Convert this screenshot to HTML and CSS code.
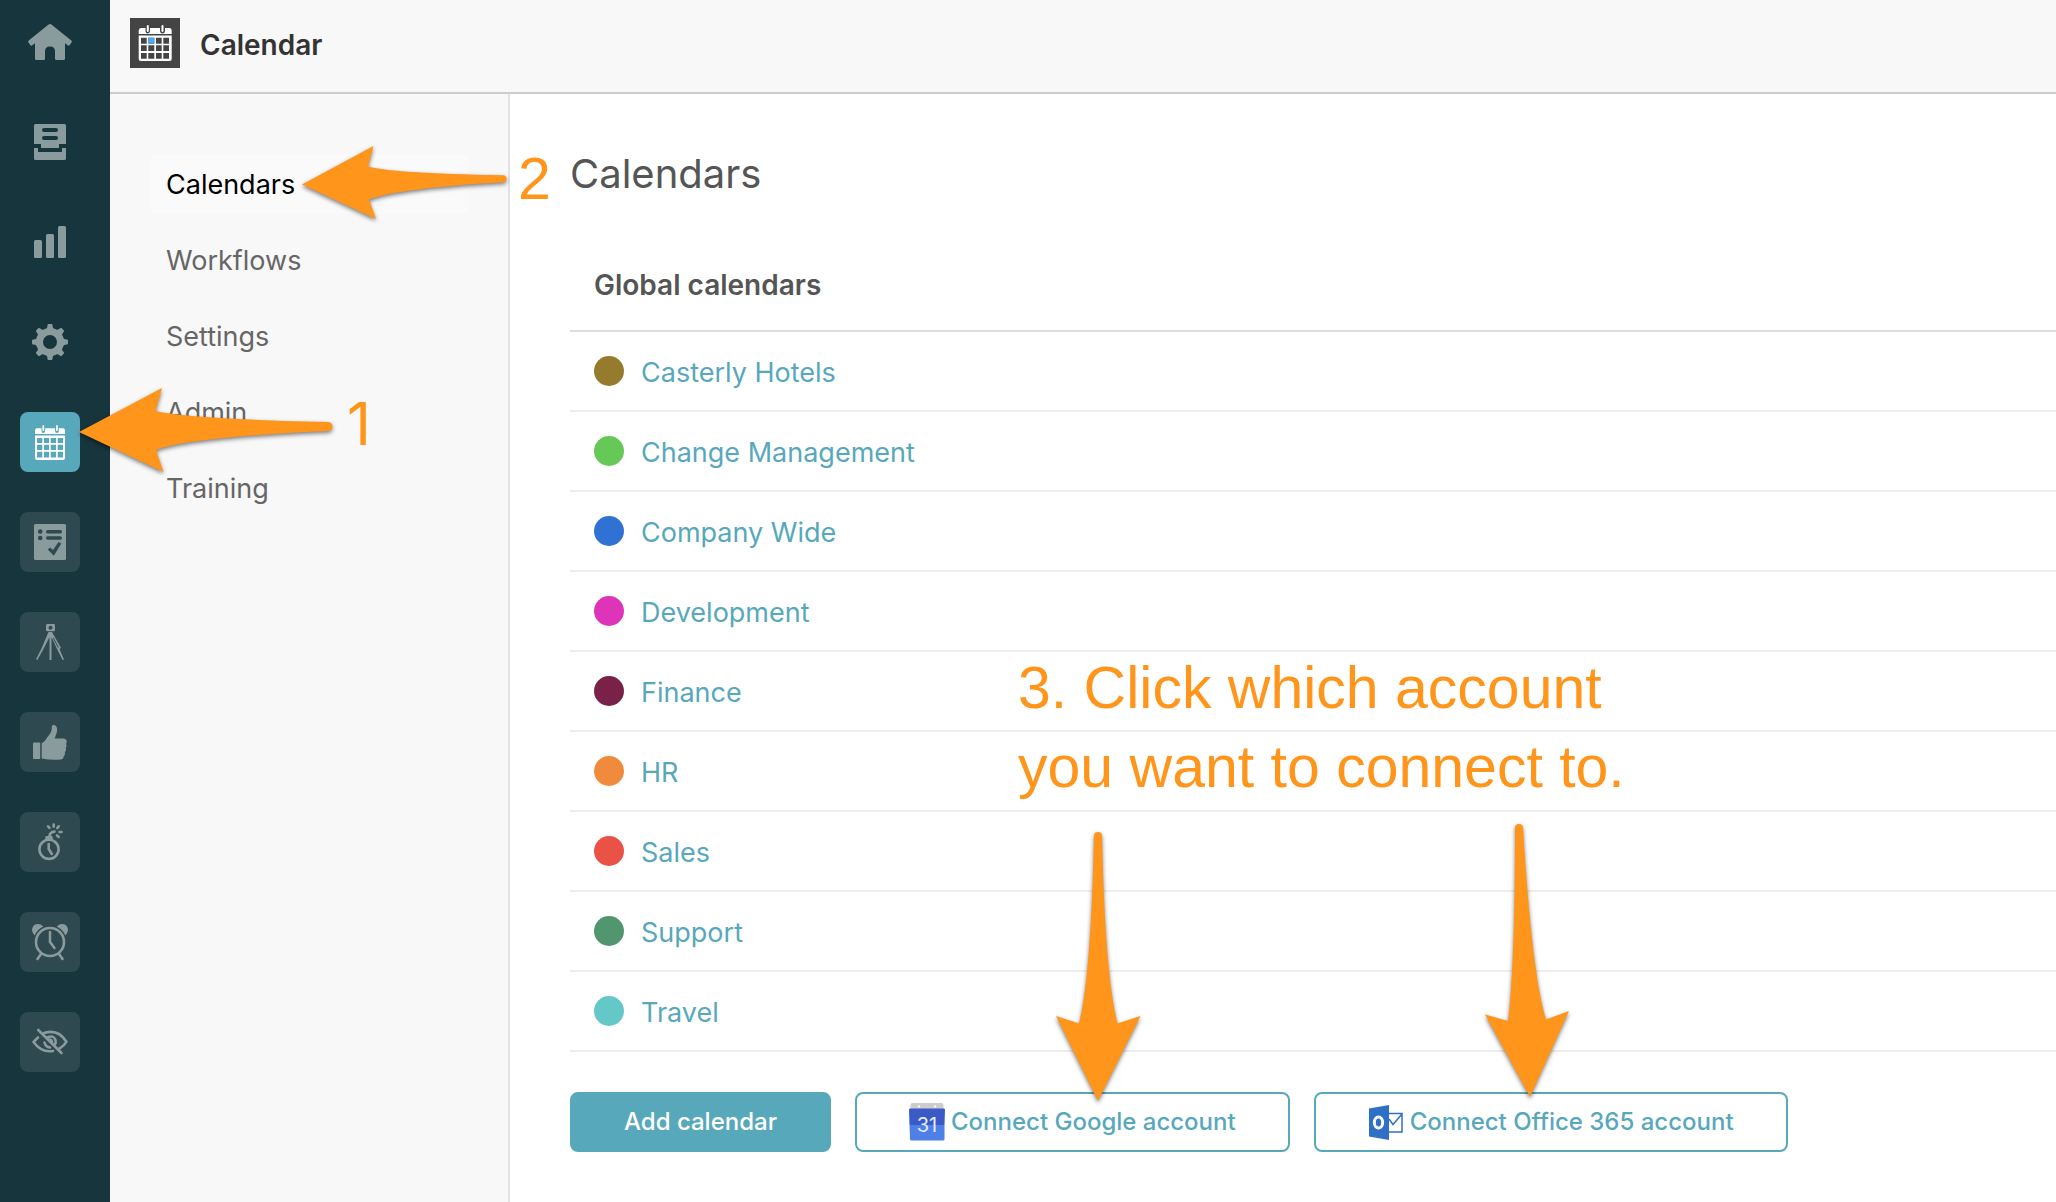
FILE: index.html
```html
<!DOCTYPE html>
<html lang="en">
<head>
<meta charset="utf-8">
<title>Calendar</title>
<meta name="viewport" content="width=device-width, initial-scale=1">
<link rel="stylesheet" href="styles.css">
</head>
<body>
<div class="app">
  <nav class="rail" aria-label="Applications">
    <a class="rail-item" href="#" aria-label="Home"><svg viewBox="0 0 60 60"><path d="M28.600 12.600Q30 11.400 31.400 12.600L51.300 28.600Q52.400 29.600 51.500 30.600L49.600 33.200Q48.700 34.100 47.600 33.300L45 31.200V46.500Q45 48 43.500 48H36.500Q35 48 35 46.500V39.500Q35 34.500 30 34.500T25 39.500V46.500Q25 48 23.500 48H16.500Q15 48 15 46.500V31.200L12.400 33.300Q11.300 34.100 10.400 33.200L8.500 30.600Q7.600 29.600 8.700 28.600Z"/></svg></a>
    <a class="rail-item" href="#" aria-label="Inbox"><svg viewBox="0 0 60 60"><path fill-rule="evenodd" d="M15.500 12H44.500Q46 12 46 13.500V32H39V36H21V32H14V13.500Q14 12 15.500 12ZM24 16A2 2 0 0 0 24 20H36A2 2 0 0 0 36 16ZM24 24A2 2 0 0 0 24 28H36A2 2 0 0 0 36 24Z"/><path d="M14 36H18V40H42V36H46V46.500Q46 48 44.500 48H15.500Q14 48 14 46.500Z"/></svg></a>
    <a class="rail-item" href="#" aria-label="Reports"><svg viewBox="0 0 60 60"><rect x="14" y="28" width="8" height="18" rx="1.500"/><rect x="26" y="22" width="8" height="24" rx="1.500"/><rect x="38" y="14" width="8" height="32" rx="1.500"/></svg></a>
    <a class="rail-item" href="#" aria-label="Preferences"><svg viewBox="0 0 60 60"><circle cx="30" cy="30" r="10.500" fill="none" stroke="currentColor" stroke-width="7"/><g><path id="tooth" d="M24 18.500Q27.500 17 27.500 13.200Q27.500 12 28.700 12H31.300Q32.500 12 32.500 13.200Q32.500 17 36 18.500Z"/><use href="#tooth" transform="rotate(45 30 30)"/><use href="#tooth" transform="rotate(90 30 30)"/><use href="#tooth" transform="rotate(135 30 30)"/><use href="#tooth" transform="rotate(180 30 30)"/><use href="#tooth" transform="rotate(225 30 30)"/><use href="#tooth" transform="rotate(270 30 30)"/><use href="#tooth" transform="rotate(315 30 30)"/></g></svg></a>
    <a class="rail-item tile active" href="#" aria-label="Calendar" aria-current="page"><svg viewBox="0 0 60 60"><path d="M15 22V18.500Q15 16.300 17 16.300H21.500V18.500Q21.500 21 23.300 21T25.200 18.500V16.300H35V18.500Q35 21 37 21T38.800 18.500V16.300H43Q45 16.300 45 18.500V22Z"/><rect x="22.400" y="13" width="1.800" height="6" rx=".9"/><rect x="36" y="13" width="1.800" height="6" rx=".9"/><path fill-rule="evenodd" d="M15 23.500H45V46Q45 48 43 48H17Q15 48 15 46ZM17 26V31H22.300V26ZM24 26V31H29V26ZM30.700 26V31H36V26ZM37.700 26V31H43V26ZM17 32.700V38H22.300V32.700ZM24 32.700V38H29V32.700ZM30.700 32.700V38H36V32.700ZM37.700 32.700V38H43V32.700ZM17 39.700V45.500H22.300V39.700ZM24 39.700V45.500H29V39.700ZM30.700 39.700V45.500H36V39.700ZM37.700 39.700V45.500H43V39.700Z"/></svg></a>
    <a class="rail-item tile" href="#" aria-label="Tasks"><svg viewBox="0 0 60 60"><rect x="14" y="12" width="32" height="36" rx="1.500"/><g class="cut"><circle cx="20.200" cy="19.600" r="2.300"/><circle cx="20.200" cy="26" r="2.300"/><rect x="26" y="17.900" width="16" height="3.500" rx="1.700"/><rect x="26" y="24.200" width="16" height="3.500" rx="1.700"/><path d="M27.800 37.500L30 35.500L33 38L38.500 30L41.300 31.500L33.800 43.800Z"/></g></svg></a>
    <a class="rail-item tile" href="#" aria-label="Survey"><svg viewBox="0 0 60 60"><path fill-rule="evenodd" d="M27.500 12H33.800Q35 12 35 13.200V18Q35 19.200 33.800 19.200H27.200Q26 19.200 26 18V13.200Q26 12 27.500 12ZM30.500 13.700A2 2 0 1 0 30.500 17.700A2 2 0 1 0 30.500 13.700Z"/><path d="M28.500 20H32L41 36L39.500 37L44 47.500L42.700 48L37 37L31.500 25V48H29.500V25L23.500 37L17.300 48L16 47.300L21.500 36.500Z"/><path class="scratch" d="M33.300 26L38.300 35.500"/></svg></a>
    <a class="rail-item tile" href="#" aria-label="Recognition"><svg viewBox="0 0 60 60"><rect x="13" y="30.500" width="7.200" height="16.500" rx="1"/><path d="M21.700 31.500Q25 29.500 27.500 25Q30 22.500 31.200 19.500Q32 17 31.800 14.500Q32.500 12.300 34.500 13Q37 14 37.200 17Q37.300 20 34.700 26.500H42Q46 26 46.700 29Q47 31 46 31.800Q47.500 33.500 45.800 36Q46.800 38.500 44.900 40.400Q45.500 43 43.600 44.300Q44 46.500 41 47.500Q31 48.300 21.700 46.500Z"/></svg></a>
    <a class="rail-item tile" href="#" aria-label="Incidents"><svg viewBox="0 0 60 60"><circle class="line" cx="29" cy="37.300" r="9.600"/><rect x="25.300" y="24" width="7.400" height="5" rx="1"/><path class="line" d="M28.700 32V37L31.800 42M29.500 24Q30 20 34.500 19.600"/><path class="line" d="M28 14.300L29.500 15.800M33.700 12.500V14.600M38.700 14.300L37.300 16M39.600 20H41.500M37 23.500L38.700 25"/></svg></a>
    <a class="rail-item tile" href="#" aria-label="Time tracking"><svg viewBox="0 0 60 60"><circle class="line" cx="30" cy="30" r="14"/><path class="line" d="M30 20V30L34.500 36M21 42L17.500 47M39 42L42.500 47"/><path d="M14.800 23.500Q17 17.500 23.300 14.500Q20 11.300 16 12.300Q12 13.500 12 18.500Q12.500 21.500 14.800 23.500ZM45.200 23.500Q43 17.500 36.700 14.500Q40 11.300 44 12.300Q48 13.500 48 18.500Q47.500 21.500 45.200 23.500Z"/></svg></a>
    <a class="rail-item tile" href="#" aria-label="Hidden"><svg viewBox="0 0 60 60"><path class="line" d="M18 25.500L13.500 30Q21.500 41 33 39M24 21Q38 16.500 46.500 29.700Q44 34 39.500 36.500M27 25.500Q33.500 22.500 35.500 28Q36 31 35 32.500M24.500 30.500Q25.500 35 30 35.500M29.500 27.500Q32 28 32 30"/><path class="line" d="M18.300 18L41.500 41"/></svg></a>
  </nav>
  <div class="workspace">
    <header class="topbar">
      <svg class="app-icon" viewBox="0 0 50 50" aria-hidden="true"><rect width="50" height="50" fill="#444"/><g fill="#fff"><path d="M8.700 16V12.500Q8.700 10 11 10H15.500V12.500Q15.500 15.500 17.700 15.500T20 12.500V10H30V12.500Q30 15.500 32.500 15.500T35 12.500V10H39.500Q41.700 10 41.700 12.500V16Z"/><rect x="16.800" y="7" width="2" height="7" rx="1"/><rect x="31.500" y="7" width="2" height="7" rx="1"/><path fill-rule="evenodd" d="M8.700 17.500H41.700V41Q41.700 43 39.700 43H10.700Q8.700 43 8.700 41ZM11 19.700V25.700H16.700V19.700ZM18.300 19.700V25.700H24.300V19.700ZM26 19.700V25.700H31.700V19.700ZM33.300 19.700V25.700H39V19.700ZM11 27.300V33H16.700V27.300ZM18.300 27.300V33H24.300V27.300ZM26 27.300V33H31.700V27.300ZM33.300 27.300V33H39V27.300ZM11 35V40.700H16.700V35ZM18.300 35V40.700H24.300V35ZM26 35V40.700H31.700V35ZM33.300 35V40.700H39V35Z"/></g><path fill="#4aa8f5" d="M18.300 19.700H24.300V25.700H18.300Z"/></svg>
      <span class="app-name">Calendar</span>
    </header>
    <div class="columns">
      <nav class="subnav" aria-label="Calendar sections">
        <a class="subnav-link current" href="#">Calendars</a>
        <a class="subnav-link" href="#">Workflows</a>
        <a class="subnav-link" href="#">Settings</a>
        <a class="subnav-link" href="#">Admin</a>
        <a class="subnav-link" href="#">Training</a>
      </nav>
      <main class="content">
        <h1 class="page-title">Calendars</h1>
        <table class="calendars">
          <thead><tr><th scope="col">Global calendars</th></tr></thead>
          <tbody>
            <tr><td><a class="calendar" href="#"><span class="dot brown"></span><span class="name">Casterly Hotels</span></a></td></tr>
            <tr><td><a class="calendar" href="#"><span class="dot green"></span><span class="name">Change Management</span></a></td></tr>
            <tr><td><a class="calendar" href="#"><span class="dot blue"></span><span class="name">Company Wide</span></a></td></tr>
            <tr><td><a class="calendar" href="#"><span class="dot pink"></span><span class="name">Development</span></a></td></tr>
            <tr><td><a class="calendar" href="#"><span class="dot plum"></span><span class="name">Finance</span></a></td></tr>
            <tr><td><a class="calendar" href="#"><span class="dot orange"></span><span class="name">HR</span></a></td></tr>
            <tr><td><a class="calendar" href="#"><span class="dot red"></span><span class="name">Sales</span></a></td></tr>
            <tr><td><a class="calendar" href="#"><span class="dot forest"></span><span class="name">Support</span></a></td></tr>
            <tr><td><a class="calendar" href="#"><span class="dot aqua"></span><span class="name">Travel</span></a></td></tr>
          </tbody>
        </table>
        <div class="actions">
          <button class="btn primary" type="button">Add calendar</button>
          <button class="btn" type="button"><svg class="btn-icon" viewBox="0 0 36 38" aria-hidden="true"><path d="M1.500 8V2Q1.500 0 3.500 0H32.500Q34.500 0 34.500 2V8Z" fill="#ccc"/><circle cx="10" cy="3.500" r="1.300" fill="#f5f5f5"/><circle cx="26" cy="3.500" r="1.300" fill="#f5f5f5"/><path d="M1 5.500H35Q36 5.500 36 7L35.500 22H.5L0 7Q0 5.500 1 5.500Z" fill="#3a5bc7"/><path d="M.5 22H35.500L35.500 36Q35.500 37.500 34 37.500H2.500Q1 37.500 1 36Z" fill="#4f80e8"/><text class="date" x="18" y="29" text-anchor="middle">31</text></svg>Connect Google account</button>
          <button class="btn" type="button"><svg class="btn-icon" viewBox="0 0 36 38" aria-hidden="true"><path d="M21 10.500H34V29H21M21 16L25 21.500L34 11" fill="none" stroke="#2f6fc4" stroke-width="1.500"/><path d="M1 5.500L21 2V37L1 33.500Z" fill="#2f6fc4"/><ellipse cx="10.500" cy="19.500" rx="4.200" ry="5.500" fill="none" stroke="#fff" stroke-width="3"/></svg>Connect Office 365 account</button>
        </div>
      </main>
    </div>
  </div>
</div>

<!-- Tutorial callouts drawn over the page -->
<div class="callouts">
  <svg class="arrows" width="1640" height="1120" aria-hidden="true">
    <path d="M79 432L162 388L155.500 411Q190 419 328 422A4.500 4.500 0 0 1 328 431Q190 437 156 450L163.500 472Z"/>
    <path d="M302 184.500L373.500 146L368 166.500Q390 173 503 175.300A3.400 3.400 0 0 1 503 182.300Q400 188 369 199.500L376 219Z"/>
    <path d="M1098 1101L1056 1016L1079 1023.500Q1091 975 1094 836A4 4 0 0 1 1102 836Q1105 975 1117.500 1023.500L1140.500 1016Z"/>
    <path d="M1530 1097L1485 1014.500L1508 1021Q1515 965 1515 828A4 4 0 0 1 1523 828Q1532 975 1546 1019.500L1569 1011Z"/>
  </svg>
  <p class="note one">1</p>
  <p class="note two">2</p>
  <p class="note three">3. Click which account<br>you want to connect to.</p>
</div>
</body>
</html>
```
FILE: styles.css
```css
* { box-sizing: border-box; }

body {
  margin: 0;
  position: relative;
  background: #fff;
  color: #555;
  font-family: Inter, "Liberation Sans", sans-serif;
  font-size: 27px;
  line-height: 36px;
}

a { color: inherit; text-decoration: none; }

.app { display: flex; min-height: 100vh; }

/* Icon rail */
.rail {
  display: flex;
  flex-direction: column;
  align-items: center;
  gap: 40px;
  flex: 0 0 110px;
  padding: 12px 30px 12px 20px;
  background: #17353c;
}
.rail-item { flex: none; width: 60px; height: 60px; border-radius: 8px; color: #8a9b9e; }
.rail-item svg { display: block; width: 60px; height: 60px; fill: currentColor; }
.tile { background: #2e494f; }
.tile.active { background: #58a8bb; color: #fff; }
.rail-item .line { fill: none; stroke: currentColor; stroke-width: 2.6px; stroke-linecap: round; stroke-linejoin: round; }
.cut { fill: #2e494f; }
.scratch { stroke: #2e494f; stroke-width: 1px; }

.workspace { display: flex; flex-direction: column; flex: 1; min-width: 0; }

.topbar {
  display: flex;
  align-items: center;
  gap: 20px;
  padding: 18px 20px 24px;
  background: #f8f8f8;
  border-bottom: 2px solid #ccc;
}
.app-icon { width: 50px; height: 50px; }
.app-name { padding-top: 3px; color: #333; font-size: 28px; font-weight: 600; }

.columns { display: flex; flex: 1; }

.subnav {
  display: flex;
  flex-direction: column;
  gap: 16px;
  flex: 0 0 400px;
  padding: 60px 40px;
  background: #f8f8f8;
  border-right: 2px solid #e2e2e2;
}
.subnav-link { padding: 13px 16px 11px; border-radius: 6px; color: #666; }
.subnav-link.current { background: #fafafa; color: #000; }

.content { flex: 1; min-width: 0; padding: 50px 0 50px 60px; }
.page-title { margin: 0 0 56px; font-size: 40px; font-weight: 400; line-height: 60px; }

.calendars { width: 100%; border-spacing: 0; }
.calendars th {
  height: 72px;
  padding: 0 24px 20px;
  border-bottom: 2px solid #ddd;
  font-size: 28px;
  font-weight: 600;
  text-align: left;
}
.calendars td { height: 80px; padding: 0 24px; border-bottom: 2px solid #eee; }
.calendar { display: flex; align-items: center; gap: 17px; color: #58a8bb; }
.name { padding-top: 3px; }
.dot { width: 30px; height: 30px; border-radius: 50%; }
.brown { background: #967b2d; }
.green { background: #66c957; }
.blue { background: #2f72d4; }
.pink { background: #de34ba; }
.plum { background: #7a2148; }
.orange { background: #f08a3c; }
.red { background: #ea5245; }
.forest { background: #529670; }
.aqua { background: #65c8c8; }

.actions { display: flex; flex-wrap: wrap; gap: 24px; margin-top: 40px; }
.btn {
  display: flex;
  align-items: center;
  gap: 6px;
  height: 60px;
  padding: 0 52px;
  border: 2px solid #58a8bb;
  border-radius: 8px;
  background: #fff;
  color: #58a8bb;
  font: 500 24px/36px Inter, "Liberation Sans", sans-serif;
}
.btn.primary { background: #58a8bb; color: #fff; }
.btn-icon { width: 36px; height: 38px; }
.date { fill: #e4ebfa; font: 400 20px Inter, sans-serif; }

/* Callouts */
.callouts { position: absolute; inset: 0; overflow: hidden; pointer-events: none; }
.arrows { position: absolute; top: 0; left: 0; fill: #ff951a; filter: drop-shadow(0 2px 2px rgba(0, 0, 0, .5)); }
.note {
  position: absolute;
  margin: 0;
  color: #ff951a;
  font: 59px/79px "Liberation Sans", Arial, sans-serif;
  white-space: nowrap;
}
.one { left: 347px; top: 384px; font-family: Inter, sans-serif; }
.two { left: 518px; top: 140px; }
.three { left: 1018px; top: 649px; }
```
